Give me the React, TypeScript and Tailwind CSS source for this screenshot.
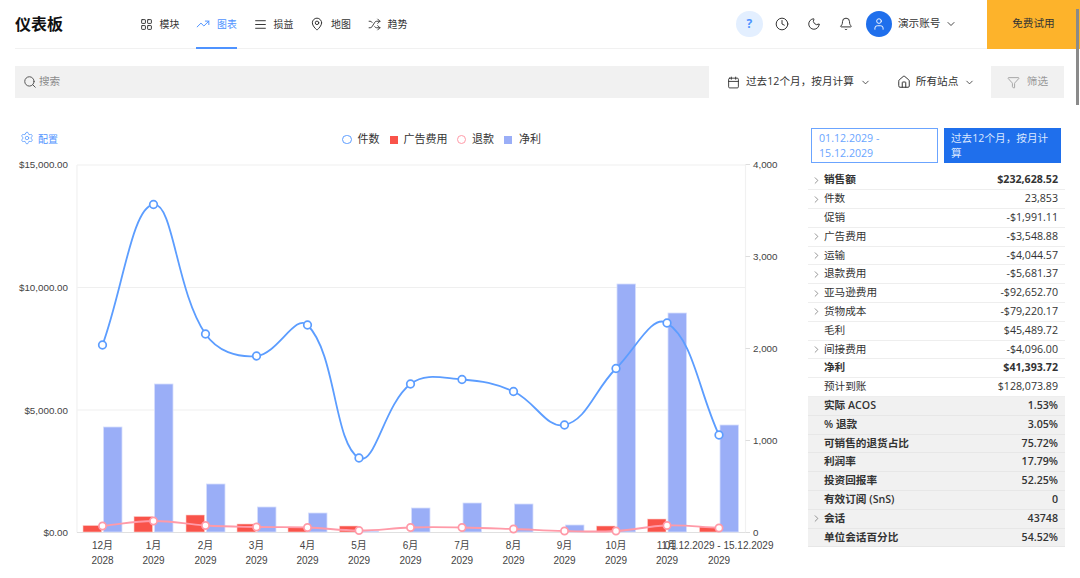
import React from "react";
import { LayoutGrid, TrendingUp, AlignJustify, MapPin, Shuffle, Clock, Moon, Bell, User, ChevronDown, ChevronRight, Calendar, Home, Filter, Search, Settings } from "lucide-react";

const xs = [102.5, 153.5, 205.5, 256.5, 307.5, 359, 410.5, 462, 513.5, 564.5, 616, 667, 719];
const blueY = [345, 204.5, 334, 356, 325, 458, 384, 379.5, 391.5, 425, 368.5, 323, 435];
const pinkY = [526, 521, 525.5, 527, 527.5, 530.5, 527.5, 527.5, 529, 531, 531, 525.5, 528];
const netTop = [427, 384, 484, 507, 513, 531, 508, 503, 504, 525, 284, 313, 425];
const redTop = [525.5, 516.5, 515, 524, 527, 526, 532, 532, 532, 532, 526, 519, 527];
const months = ["12月", "1月", "2月", "3月", "4月", "5月", "6月", "7月", "8月", "9月", "10月", "11月", "01.12.2029 - 15.12.2029"];
const years = ["2028", ...Array(12).fill("2029")];

function smooth(ys: number[], t = 0.4) {
  const n = xs.length;
  const cp: { px: number; py: number; nx: number; ny: number }[] = [];
  for (let i = 0; i < n; i++) {
    const p0 = i > 0 ? i - 1 : i;
    const p2 = i < n - 1 ? i + 1 : i;
    const d01 = Math.hypot(xs[i] - xs[p0], ys[i] - ys[p0]);
    const d12 = Math.hypot(xs[p2] - xs[i], ys[p2] - ys[i]);
    const s = d01 + d12 || 1;
    const fa = (t * d01) / s;
    const fb = (t * d12) / s;
    cp.push({
      px: xs[i] - fa * (xs[p2] - xs[p0]),
      py: ys[i] - fa * (ys[p2] - ys[p0]),
      nx: xs[i] + fb * (xs[p2] - xs[p0]),
      ny: ys[i] + fb * (ys[p2] - ys[p0]),
    });
  }
  let d = `M${xs[0]} ${ys[0]}`;
  for (let i = 1; i < n; i++) {
    d += ` C${cp[i - 1].nx} ${cp[i - 1].ny} ${cp[i].px} ${cp[i].py} ${xs[i]} ${ys[i]}`;
  }
  return d;
}

const Nav = ({ icon, label, active }: { icon: React.ReactNode; label: string; active?: boolean }) => (
  <div className={`relative flex h-[49px] w-[41px] items-center justify-center gap-[7px] text-[9.9px] ${active ? "text-[#4f93ff]" : "text-[#333333]"}`}>
    {icon}
    <span className="whitespace-nowrap">{label}</span>
    {active && <div className="absolute bottom-0 left-0 right-0 h-[2px] bg-[#4f93ff]" />}
  </div>
);

const rows: { l: string; v: string; chev?: boolean; bold?: boolean; grey?: boolean }[] = [
  { l: "销售额", v: "$232,628.52", chev: true, bold: true },
  { l: "件数", v: "23,853", chev: true },
  { l: "促销", v: "-$1,991.11" },
  { l: "广告费用", v: "-$3,548.88", chev: true },
  { l: "运输", v: "-$4,044.57", chev: true },
  { l: "退款费用", v: "-$5,681.37", chev: true },
  { l: "亚马逊费用", v: "-$92,652.70", chev: true },
  { l: "货物成本", v: "-$79,220.17", chev: true },
  { l: "毛利", v: "$45,489.72" },
  { l: "间接费用", v: "-$4,096.00", chev: true },
  { l: "净利", v: "$41,393.72", bold: true },
  { l: "预计到账", v: "$128,073.89" },
  { l: "实际 ACOS", v: "1.53%", grey: true },
  { l: "% 退款", v: "3.05%", grey: true },
  { l: "可销售的退货占比", v: "75.72%", grey: true },
  { l: "利润率", v: "17.79%", grey: true },
  { l: "投资回报率", v: "52.25%", grey: true },
  { l: "有效订阅 (SnS)", v: "0", grey: true },
  { l: "会话", v: "43748", grey: true, chev: true },
  { l: "单位会话百分比", v: "54.52%", grey: true },
];

const Chart = () => {
  const axis = { fontFamily: '"Liberation Sans","Noto Sans CJK SC",sans-serif', fontSize: 9.8, fill: "#444444" };
  const xAxis = { ...axis, fontSize: 10 };
  return (
    <svg viewBox="15 155 793 415" className="block h-[415px] w-[793px]">
      {[165, 287.5, 410].map((y) => (
        <line key={y} x1="77" x2="745.5" y1={y} y2={y} stroke="#efefef" strokeWidth="1.2" />
      ))}
      <line x1="77" x2="77" y1="165" y2="532.5" stroke="#f1f1f1" strokeWidth="1.2" />
      <line x1="745.5" x2="745.5" y1="165" y2="532.5" stroke="#f1f1f1" strokeWidth="1.2" />
      <line x1="77" x2="745.5" y1="532.5" y2="532.5" stroke="#e0e0e0" strokeWidth="1.2" />
      {[164.5, 256.5, 348.5, 440.5, 532.5].map((y) => (
        <line key={y} x1="745.5" x2="750" y1={y} y2={y} stroke="#dddddd" />
      ))}
      {[["$15,000.00", 164], ["$10,000.00", 287], ["$5,000.00", 410], ["$0.00", 532]].map(([t, y]) => (
        <text key={t} x="68" y={Number(y) + 3.5} textAnchor="end" style={axis}>{t}</text>
      ))}
      {[["4,000", 164], ["3,000", 256.5], ["2,000", 348.5], ["1,000", 440.5], ["0", 532.5]].map(([t, y]) => (
        <text key={t} x="753" y={Number(y) + 3.5} style={axis}>{t}</text>
      ))}
      {xs.map((x, i) => (
        <g key={i}>
          {redTop[i] < 532 && (
            <rect x={x - 19.5} y={redTop[i]} width="18.5" height={532 - redTop[i]} fill="#f9534a" stroke="#fbd0cd" strokeWidth="0.6" />
          )}
          <rect x={x + 1} y={netTop[i]} width="18.5" height={532 - netTop[i]} fill="#9aaef7" stroke="#d6defc" strokeWidth="0.8" />
        </g>
      ))}
      <path d={smooth(blueY)} fill="none" stroke="#5c9dff" strokeWidth="1.8" />
      <path d={smooth(pinkY)} fill="none" stroke="#ff9aa8" strokeWidth="1.8" />
      {xs.map((x, i) => (
        <circle key={i} cx={x} cy={blueY[i]} r="3.8" fill="#fff" stroke="#5c9dff" strokeWidth="1.7" />
      ))}
      {xs.map((x, i) => (
        <circle key={i} cx={x} cy={pinkY[i]} r="3.6" fill="#fff" stroke="#ff9aa8" strokeWidth="1.7" />
      ))}
      {xs.map((x, i) => (
        <g key={i}>
          <text x={x} y="549" textAnchor="middle" style={xAxis}>{months[i]}</text>
          <text x={x} y="564" textAnchor="middle" style={xAxis}>{years[i]}</text>
        </g>
      ))}
    </svg>
  );
};

export default function App() {
  return (
    <div className="relative h-[578px] w-[1080px] overflow-hidden bg-white text-[#333333]" style={{ fontFamily: '"Open Sans","Noto Sans CJK SC",sans-serif' }}>
      <div className="absolute right-[1px] top-[9px] h-[96px] w-[3px] bg-[#8a8a8a]" />

      <header className="ml-[15px] flex h-[49px] items-center border-b border-[#f1f1f1]">
        <h1 className="w-[124px] text-[16px] font-bold text-[#111111]">仪表板</h1>
        <nav className="flex gap-[16px]">
          <Nav icon={<LayoutGrid size={13} strokeWidth={1.8} />} label="模块" />
          <Nav active icon={<TrendingUp size={14} strokeWidth={1.7} />} label="图表" />
          <Nav icon={<AlignJustify size={13} strokeWidth={1.8} />} label="损益" />
          <Nav icon={<MapPin size={14} strokeWidth={1.7} />} label="地图" />
          <Nav icon={<Shuffle size={13} strokeWidth={1.7} />} label="趋势" />
        </nav>
        <div className="ml-[328px] flex items-center">
          <div className="flex h-[26.5px] w-[26.5px] items-center justify-center rounded-full bg-[#e3efff] text-[12px] font-bold text-[#4f93ff]">?</div>
          <Clock size={14} strokeWidth={1.7} className="ml-[12px]" />
          <Moon size={14} strokeWidth={1.7} className="ml-[18.5px]" />
          <Bell size={14} strokeWidth={1.7} className="ml-[18px]" />
          <div className="ml-[13px] flex h-[26px] w-[26px] items-center justify-center rounded-full bg-[#1f6fec] text-white">
            <User size={14} strokeWidth={1.6} />
          </div>
          <span className="ml-[6px] text-[10.64px]">演示账号</span>
          <ChevronDown size={12} strokeWidth={1.8} className="ml-[4px]" />
        </div>
        <div className="ml-auto flex h-[49px] w-[93px] items-center justify-center bg-[#fdb32b] text-[10.64px] text-[#333333]">免费试用</div>
      </header>

      <div className="mt-[17px] flex h-[32px] items-center pl-[15px] text-[10.64px]">
        <div className="flex h-full w-[694px] items-center gap-[2px] bg-[#f1f1f1] pl-[8px] text-[#8c8c8c]">
          <Search size={14} strokeWidth={1.7} className="text-[#555555]" />
          <span>搜索</span>
        </div>
        <Calendar size={13} strokeWidth={1.7} className="ml-[18px]" />
        <span className="ml-[6px] whitespace-nowrap">过去12个月，按月计算</span>
        <ChevronDown size={11} strokeWidth={1.8} className="ml-[6.5px]" />
        <Home size={14} strokeWidth={1.7} className="ml-[25.5px]" />
        <span className="ml-[5px] whitespace-nowrap">所有站点</span>
        <ChevronDown size={11} strokeWidth={1.8} className="ml-[5.5px]" />
        <div className="ml-[16px] flex h-full w-[73px] items-center gap-[7px] bg-[#f1f1f1] pl-[16px] text-[#9a9a9a]">
          <Filter size={13} strokeWidth={1.6} />
          <span>筛选</span>
        </div>
      </div>

      <div className="mt-[26px] flex pl-[15px]">
        <div className="w-[793px]">
          <div className="flex h-[31px] items-center text-[11px]">
            <Settings size={14} strokeWidth={1.4} className="ml-[5px] -translate-y-[2px] text-[#5c9dff]" />
            <span className="ml-[4px] w-[45px] text-[10px] text-[#4f93ff]">配置</span>
            <span className="ml-[259px] h-[9.5px] w-[9.5px] rounded-full border-[1.7px] border-[#5c9dff]" />
            <span className="ml-[6px]">件数</span>
            <span className="ml-[10px] h-[8px] w-[8px] bg-[#f9534a]" />
            <span className="ml-[6px]">广告费用</span>
            <span className="ml-[9px] h-[9.5px] w-[9.5px] rounded-full border-[1.7px] border-[#ff9aa8]" />
            <span className="ml-[6px]">退款</span>
            <span className="ml-[10px] h-[8px] w-[8px] bg-[#9aaef7]" />
            <span className="ml-[7px]">净利</span>
          </div>
          <Chart />
        </div>
        <aside className="w-[257px] pt-[4px] text-[10.64px]">
          <div className="mb-[8.5px] flex gap-[6px] pl-[3px] leading-[15px]">
            <div className="h-[35px] w-[127px] border border-[#6ba4ff] pl-[7px] pr-[30px] pt-[2px] text-[#6aa5ff]">01.12.2029 - 15.12.2029</div>
            <div className="h-[35px] w-[117px] bg-[#1f6fec] pl-[7px] pr-[8px] pt-[3px] text-[#dbe8ff]">过去12个月，按月计算</div>
          </div>
          {rows.map((r) => (
            <div key={r.l} className={`flex h-[18.8px] items-center border-b pr-[7px] ${r.grey ? "border-[#e7e7e7] bg-[#f1f1f1] font-semibold" : "border-[#eeeeee]"} ${r.bold ? "font-bold" : ""}`}>
              <span className="flex w-[16px] justify-center">
                {r.chev && <ChevronRight size={11} strokeWidth={1.5} className="text-[#666666]" />}
              </span>
              <span className="whitespace-nowrap">{r.l}</span>
              <span className="ml-auto">{r.v}</span>
            </div>
          ))}
        </aside>
      </div>
    </div>
  );
}
